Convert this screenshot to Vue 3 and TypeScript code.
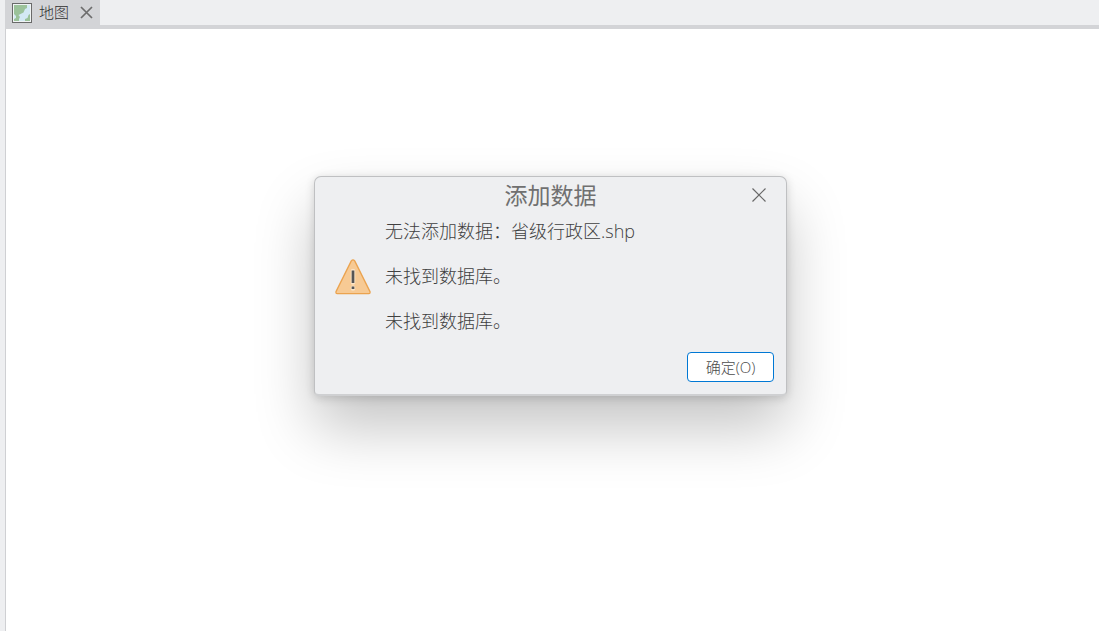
<script setup lang="ts">
import { ref } from 'vue'

const tabOpen = ref(true)
const dialogOpen = ref(true)
const messages: string[] = ['未找到数据库。', '未找到数据库。']

function closeDialog(): void {
  dialogOpen.value = false
}
</script>

<template>
  <div class="workspace">
    <header class="tab-bar">
      <div v-if="tabOpen" class="tab">
        <svg class="tab-icon" viewBox="0 0 20 20" aria-hidden="true">
          <rect x="0.5" y="0.5" width="19" height="19" fill="#f0f4f4" stroke="#6a6a6a" />
          <rect x="2" y="2" width="16" height="16" fill="#9bc29a" />
          <path d="M15 2h3v9l-1.5 1-1 3-2.500 1v2H7v-2l1-2-1.500-2 2-1 3-1.500L13 6l2-1z" fill="#d3e9f4" />
          <path d="M2 11l2 2v2l-2 1z" fill="#d3e9f4" />
        </svg>
        <span class="tab-label">地图</span>
        <button class="icon-button" type="button" aria-label="关闭地图" @click="tabOpen = false">
          <svg viewBox="0 0 13 13" width="13" height="13" aria-hidden="true">
            <path d="M1 1l11 11M12 1L1 12" fill="none" stroke="#6c6c6c" stroke-width="1.7" />
          </svg>
        </button>
      </div>
    </header>
    <main class="map-view"></main>

    <div v-if="dialogOpen" class="overlay">
      <section class="dialog" role="alertdialog" aria-labelledby="dialog-title" aria-describedby="dialog-text">
        <div class="title-bar">
          <h1 id="dialog-title">添加数据</h1>
          <button class="icon-button dialog-close" type="button" aria-label="关闭" @click="closeDialog">
            <svg viewBox="0 0 14 14" width="14" height="14" aria-hidden="true">
              <path d="M0.5 0.5l13 13M13.5 0.5l-13 13" fill="none" stroke="#686868" stroke-width="1.2" />
            </svg>
          </button>
        </div>
        <div class="body">
          <svg class="warning" viewBox="0 0 36 36" aria-hidden="true">
            <path
              d="M16.3 1.9Q18 0 19.7 1.9L35 32.600Q35.400 34.600 33.800 34.600H2.200Q0.600 34.600 1 32.600z"
              fill="#f7ca94"
              stroke="#eba34f"
              stroke-width="1.3"
              stroke-linejoin="round"
            />
            <path d="M18 12v11.500M18 28.500v1" stroke="#fbe3c5" stroke-width="4.600" stroke-linecap="round" />
            <path d="M18 11.500v12.500M18 27.500v2.500" stroke="#555555" stroke-width="2.700" />
          </svg>
          <div id="dialog-text" class="text">
            <p>
              <span>无法添加数据：</span><span>省级行政区.shp</span>
            </p>
            <p v-for="(message, index) in messages" :key="index">{{ message }}</p>
          </div>
        </div>
        <footer class="actions">
          <button class="ok" type="button" @click="closeDialog">确定(O)</button>
        </footer>
      </section>
    </div>
  </div>
</template>

<style>
body {
  margin: 0;
  background: #ffffff;
}
</style>

<style scoped>
.workspace {
  position: relative;
  display: flex;
  flex-direction: column;
  box-sizing: border-box;
  min-height: 100vh;
  padding-left: 5px;
  background: #eeeff1;
  font-family: "Open Sans", "Noto Sans CJK SC", sans-serif;
  font-weight: 300;
  color: #4c4c4c;
}

.tab-bar {
  display: flex;
  height: 25px;
  border-bottom: 4px solid #d3d4d7;
}

.tab {
  display: flex;
  align-items: center;
  padding: 0 7px;
  background: #d3d4d7;
}

.tab-icon {
  width: 20px;
  height: 20px;
}

.tab-label {
  margin: 0 11px 0 7px;
  padding-bottom: 2px;
  font-size: 15px;
  line-height: 22px;
  color: #303030;
}

.icon-button {
  display: flex;
  padding: 0;
  border: 0;
  background: none;
}

.map-view {
  flex: 1;
  border-left: 1px solid #cfd0d3;
  background: #ffffff;
}

.overlay {
  position: absolute;
  inset: 0;
  display: flex;
  justify-content: center;
  align-items: flex-start;
  padding: 176px 0 0 2px;
}

.dialog {
  box-sizing: border-box;
  width: 473px;
  border: 1px solid #bfc0c2;
  border-bottom: 2px solid #cfd0d2;
  border-radius: 7px 7px 5px 5px;
  background: #eeeff1;
  box-shadow:
    0 2px 10px rgba(0, 0, 0, 0.16),
    0 32px 60px rgba(0, 0, 0, 0.23);
}

.title-bar {
  display: grid;
  grid-template-columns: 1fr auto 1fr;
  align-items: center;
  height: 36px;
  padding: 0 20px;
}

h1 {
  grid-column: 2;
  margin: 0;
  font-size: 23px;
  line-height: 36px;
  font-weight: 400;
  color: #707070;
}

.dialog-close {
  justify-self: end;
}

.body {
  display: flex;
  align-items: center;
  gap: 14px;
  padding: 6px 20px 0;
}

.warning {
  flex: none;
  width: 36px;
  height: 36px;
}

.text {
  display: grid;
  gap: 20px;
}

p {
  display: flex;
  margin: 0;
  font-size: 18px;
  line-height: 25px;
  color: #404040;
}

.actions {
  display: flex;
  justify-content: flex-end;
  padding: 18px 12px 12px;
}

.ok {
  width: 87px;
  height: 30px;
  padding: 0 0 2px;
  border: 1px solid #0078d4;
  border-radius: 4px;
  background: #ffffff;
  font: inherit;
  font-size: 15px;
  color: #4c4c4c;
}
</style>
